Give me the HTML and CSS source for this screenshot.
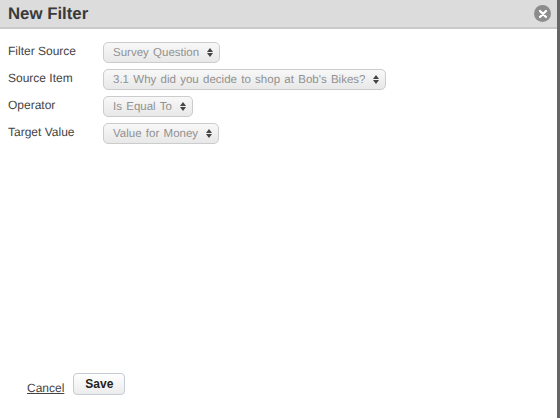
FILE: index.html
```html
<!DOCTYPE html>
<html lang="en">
<head>
    <meta charset="UTF-8">
    <title>New Filter</title>
    <link rel="stylesheet" href="styles.css">
</head>
<body>
    <div class="dialog">
        <header class="dialog-head">
            <h1>New Filter</h1>
            <span class="close">
                <svg width="10" height="10" viewBox="0 0 10 10"><path d="M2 2L8 8M8 2L2 8" stroke="#fff" stroke-width="2.2" stroke-linecap="round"/></svg>
            </span>
        </header>
        <main class="dialog-body">
            <div class="row">
                <label>Filter Source</label>
                <span class="select">Survey Question<i class="arrows"></i></span>
            </div>
            <div class="row">
                <label>Source Item</label>
                <span class="select">3.1 Why did you decide to shop at Bob's Bikes?<i class="arrows"></i></span>
            </div>
            <div class="row">
                <label>Operator</label>
                <span class="select">Is Equal To<i class="arrows"></i></span>
            </div>
            <div class="row">
                <label>Target Value</label>
                <span class="select">Value for Money<i class="arrows"></i></span>
            </div>
        </main>
        <footer class="dialog-foot">
            <a href="#">Cancel</a>
            <button>Save</button>
        </footer>
    </div>
</body>
</html>
```

FILE: styles.css
```css
html, body {
    height: 100%;
}

body {
    margin: 0;
    font-family: "Liberation Sans", Arial, sans-serif;
    font-size: 12px;
    color: #444;
    background-color: #fff;
    text-rendering: geometricPrecision;
}

.dialog {
    height: 418px;
    width: 557px;
    display: flex;
    flex-direction: column;
    border-right: 3px solid #666;
    box-sizing: content-box;
}

.dialog-head {
    height: 27px;
    display: flex;
    align-items: center;
    justify-content: space-between;
    padding: 0 6px 0 8px;
    background-color: #dcdcdc;
    border-bottom: 2px solid #c8caca;
}

.dialog-head h1 {
    margin: 0;
    font-size: 16.8px;
    color: #3a3a3a;
}

.close {
    width: 17px;
    height: 17px;
    border-radius: 50%;
    background-color: #8c8c8c;
    display: flex;
    align-items: center;
    justify-content: center;
}

.dialog-body {
    flex: 1;
    padding: 13px 8px 0 8px;
}

.row {
    display: flex;
    align-items: flex-start;
    height: 21px;
    margin-bottom: 6px;
}

.row label {
    width: 95px;
    line-height: 20px;
    margin-top: -1px;
}

.select {
    display: flex;
    align-items: center;
    height: 21px;
    box-sizing: border-box;
    padding: 0 5px 0 9px;
    border: 1px solid #ccc;
    border-radius: 5px;
    background: linear-gradient(#f8f8f8, #e8e8e8);
    color: #919191;
    font-size: 11.5px;
    word-spacing: 1.1px;
    white-space: nowrap;
}

.arrows {
    display: inline-block;
    width: 7px;
    height: 9px;
    margin-left: 8px;
    position: relative;
}

.arrows::before,
.arrows::after {
    content: "";
    position: absolute;
    left: 0;
    border-left: 3.5px solid transparent;
    border-right: 3.5px solid transparent;
}

.arrows::before {
    top: 0;
    border-bottom: 4px solid #444;
}

.arrows::after {
    bottom: 0;
    border-top: 4px solid #444;
}

.dialog-foot {
    display: flex;
    align-items: flex-end;
    padding: 0 0 23px 27px;
}

.dialog-foot a {
    color: #444;
    margin-right: 9px;
}

.dialog-foot button {
    width: 52px;
    height: 22px;
    padding: 0;
    font-family: inherit;
    font-size: 12px;
    font-weight: bold;
    color: #222;
    background: linear-gradient(#fff, #ececec);
    border: 1px solid #c5ccd6;
    border-radius: 4px;
}
```
